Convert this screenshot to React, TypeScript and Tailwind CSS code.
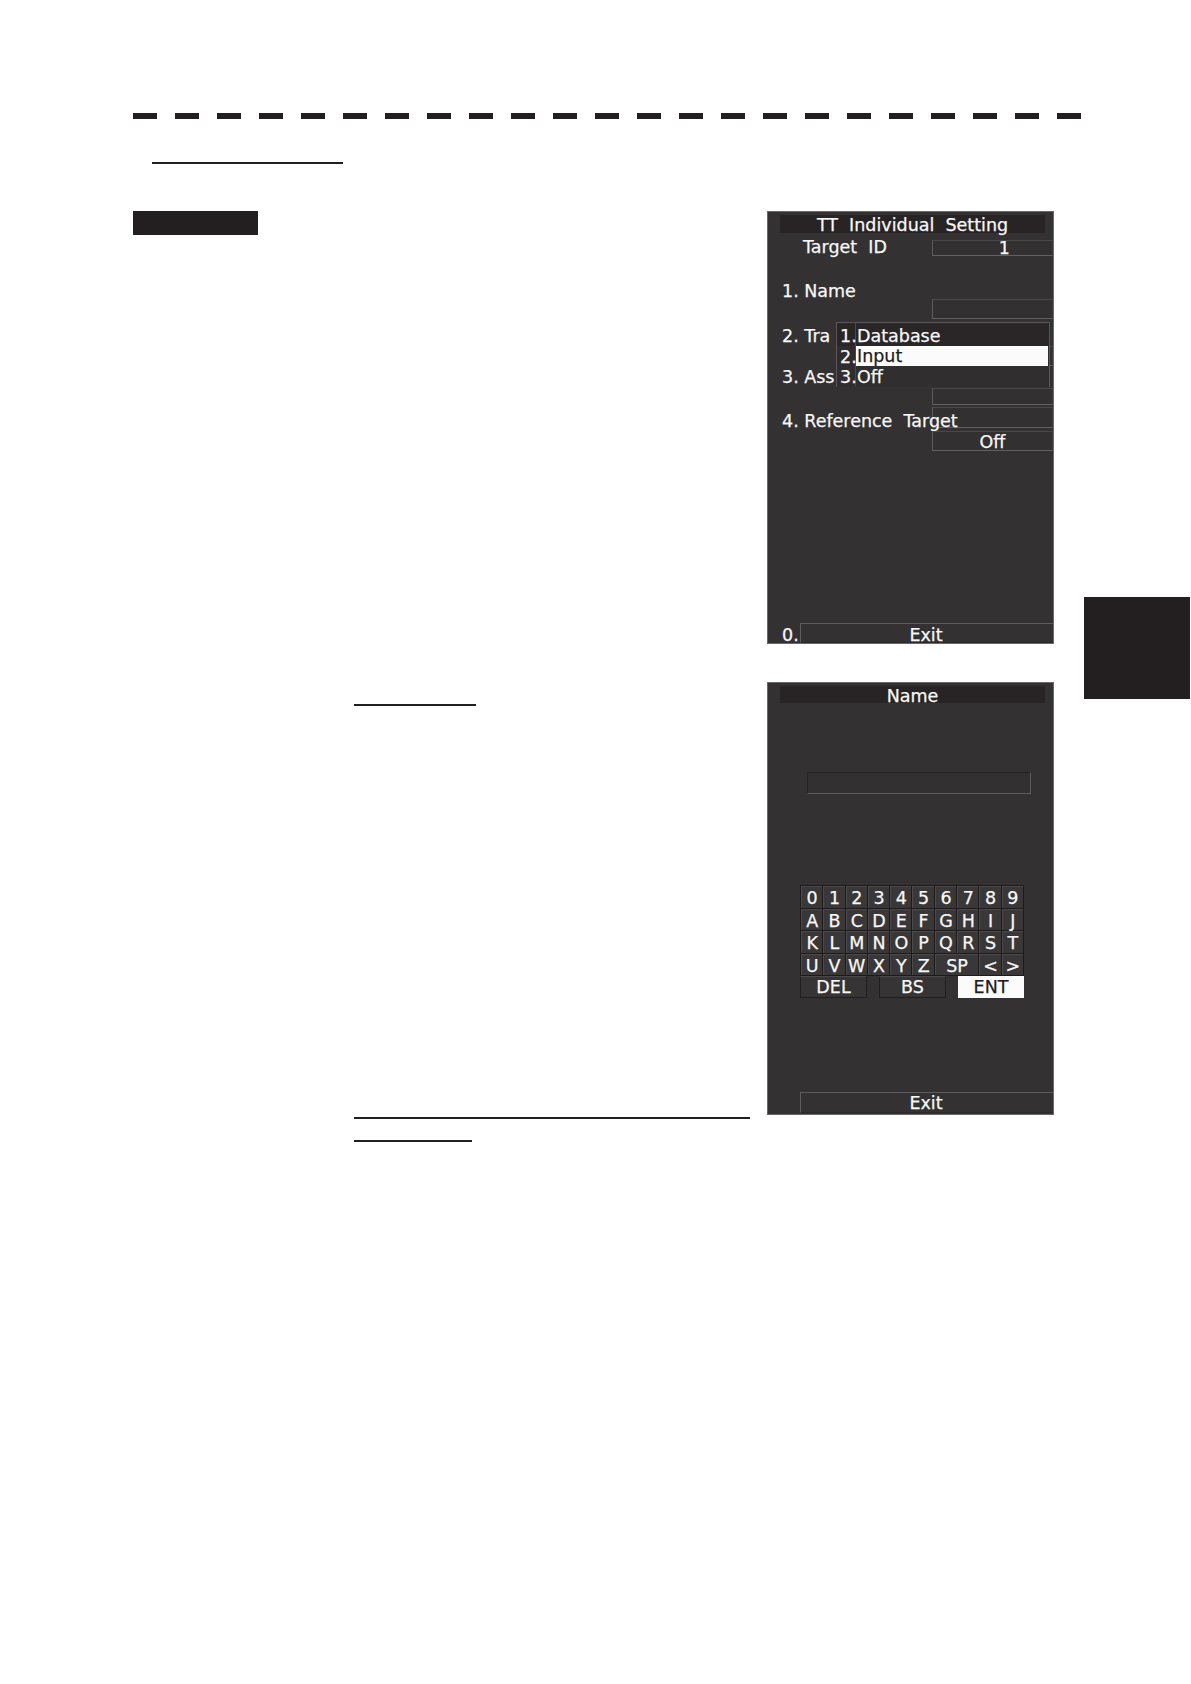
import React from "react";

const font = { fontFamily: '"DejaVu Sans", "Liberation Sans", sans-serif' };

function ValueBox({ children, className = "" }: { children?: React.ReactNode; className?: string }) {
  return (
    <div
      className={
        "box-border border border-t-[#4a4849] border-l-[#5c5a5b] border-b-[#626061] border-r-[#3a3839] bg-[#323031] " +
        className
      }
    >
      {children}
    </div>
  );
}

function Panel1() {
  return (
    <div className="relative box-border w-[287px] h-[433px] border border-[#6a6869] bg-[#333132] text-[#f7f7f7] text-[17.5px] [-webkit-text-stroke:0.25px_#f7f7f7]">
      <div className="flex flex-col">
        <div className="mt-[3px] ml-[12px] w-[265px] h-[18px] bg-[#282425] text-center leading-[20px] whitespace-pre">
          TT  Individual  Setting
        </div>
        <div className="mt-[4px] flex h-[20px]">
          <div className="w-[164px] pl-[35px] leading-[20px] whitespace-pre">Target  ID</div>
          <ValueBox className="mt-[3px] h-[16px] w-[121px] text-right pr-[42px] leading-[14px] whitespace-pre">1</ValueBox>
        </div>
        <div className="mt-[24px] h-[18px] pl-[14px] leading-[20px] whitespace-pre">1. Name</div>
        <ValueBox className="ml-[164px] w-[121px] h-[20px]" />
        <div className="mt-[7px] h-[20px] w-[68px] pl-[14px] leading-[20px] whitespace-pre">2. Tra</div>
        <ValueBox className="ml-[164px] w-[121px] h-[20px]" />
        <div className="mt-[1px] h-[20px] w-[68px] pl-[14px] leading-[20px] whitespace-pre">3. Ass</div>
        <ValueBox className="mt-[1px] ml-[164px] w-[121px] h-[17px]" />
        <div className="mt-[2px] grid">
          <ValueBox className="col-start-1 row-start-1 ml-[164px] w-[121px] h-[21px]" />
          <div className="col-start-1 row-start-1 pl-[14px] pt-[4px] leading-[20px] whitespace-pre">4. Reference  Target</div>
        </div>
        <ValueBox className="ml-[164px] w-[121px] h-[20px] text-center leading-[20px]">Off</ValueBox>
        <div className="mt-[172px] flex h-[20px]">
          <div className="w-[32px] pl-[14px] pt-[2px] leading-[20px]">0.</div>
          <div className="box-border flex-1 h-[20px] border-t border-l border-t-[#5e5c5d] border-l-[#5e5c5d] border-b border-b-[#2a2829] text-center pt-[1px] leading-[20px] pr-[2px]">
            Exit
          </div>
        </div>
      </div>
      {/* dropdown menu */}
      <div className="absolute left-[68px] top-[110px] w-[214px] h-[65px] box-border border border-[#595758] bg-[#2c2829] flex flex-col">
        <div className="flex h-[23px] bg-[#2a2627]">
          <div className="w-[19px] border-r border-[#4a4849] pl-[3px] pt-[3px] leading-[20px]">1.</div>
          <div className="flex-1 pl-[1px] pt-[3px] leading-[20px]">Database</div>
        </div>
        <div className="flex h-[20px] bg-[#2e2c2d]">
          <div className="w-[19px] border-r border-[#4a4849] pl-[3px] pt-[1px] leading-[20px]">2.</div>
          <div className="flex-1 mr-[1px] bg-[#fbfbfb] text-[#1e1c1d] [-webkit-text-stroke:0.25px_#1e1c1d] pl-[1px] pt-[1px] leading-[18px] overflow-hidden">Input</div>
        </div>
        <div className="flex flex-1 bg-[#302e2f]">
          <div className="w-[19px] border-r border-[#4a4849] pl-[3px] pt-[1px] leading-[20px]">3.</div>
          <div className="flex-1 pl-[1px] pt-[1px] leading-[20px]">Off</div>
        </div>
      </div>
    </div>
  );
}

const rows: string[][] = [
  ["0", "1", "2", "3", "4", "5", "6", "7", "8", "9"],
  ["A", "B", "C", "D", "E", "F", "G", "H", "I", "J"],
  ["K", "L", "M", "N", "O", "P", "Q", "R", "S", "T"],
];

function Key({ label, wide = false }: { label: string; wide?: boolean }) {
  return (
    <div
      className={
        (wide ? "col-span-2 " : "") +
        "h-[21.5px] bg-[#393738] text-center leading-[22px] border-t border-l border-[#4c4a4b]"
      }
    >
      {label}
    </div>
  );
}

function Panel2() {
  return (
    <div className="box-border w-[287px] h-[433px] border border-[#6a6869] bg-[#333132] text-[#f7f7f7] text-[17.5px] [-webkit-text-stroke:0.25px_#f7f7f7] flex flex-col">
      <div className="mt-[3px] ml-[12px] w-[265px] h-[17px] bg-[#282425] text-center leading-[20px]">Name</div>
      <div className="mt-[69px] ml-[39px] w-[224px] h-[22px] box-border border border-t-[#242223] border-l-[#242223] border-b-[#5e5c5d] border-r-[#5e5c5d] bg-[#323031]" />
      <div className="mt-[91px] ml-[32px] w-[224px] grid grid-cols-10 gap-px bg-[#1c1a1b] p-px">
        {rows.map((r) => r.map((k) => <Key key={k} label={k} />))}
        <Key label="U" />
        <Key label="V" />
        <Key label="W" />
        <Key label="X" />
        <Key label="Y" />
        <Key label="Z" />
        <Key label="SP" wide />
        <Key label="<" />
        <Key label=">" />
      </div>
      <div className="ml-[32px] w-[224px] flex h-[22px]">
        <div className="w-[67px] h-[22px] box-border border border-[#1f1d1e] border-t-[#4a4849] bg-[#363435] text-center leading-[21px]">DEL</div>
        <div className="ml-[12px] w-[67px] h-[22px] box-border border border-[#1f1d1e] border-t-[#4a4849] bg-[#363435] text-center leading-[21px]">BS</div>
        <div className="ml-[12px] w-[66px] h-[22px] bg-[#fbfbfb] text-[#1e1c1d] [-webkit-text-stroke:0.25px_#1e1c1d] text-center leading-[22px]">ENT</div>
      </div>
      <div className="mt-[94px] ml-[32px] w-[253px] h-[21px] box-border border-t border-l border-t-[#5e5c5d] border-l-[#5e5c5d] border-b border-b-[#2a2829] text-center leading-[21px] pr-[2px]">
        Exit
      </div>
    </div>
  );
}

export default function App() {
  return (
    <div className="relative w-[1191px] h-[1684px] bg-white overflow-hidden" style={font}>
      <div className="pt-[113px] ml-[133px] flex gap-[18px]">
        {Array.from({ length: 23 }).map((_, i) => (
          <div key={i} className="w-[24px] h-[6px] bg-[#231f20]" />
        ))}
      </div>
      <div className="mt-[43px] ml-[152px] w-[191px] h-[2px] bg-[#231f20]" />
      <div className="mt-[47px] ml-[133px] flex items-start">
        <div className="w-[634px] flex flex-col">
          <div className="w-[125px] h-[24px] bg-[#231f20]" />
          <div className="mt-[469px] ml-[221px] w-[122px] h-[2px] bg-[#231f20]" />
          <div className="mt-[411px] ml-[221px] w-[396px] h-[2px] bg-[#231f20]" />
          <div className="mt-[21px] ml-[221px] w-[118px] h-[2px] bg-[#231f20]" />
        </div>
        <div className="w-[287px] flex flex-col">
          <Panel1 />
          <div className="mt-[38px]">
            <Panel2 />
          </div>
        </div>
        <div className="ml-[30px] mt-[386px] w-[106px] h-[102px] bg-[#231f20]" />
      </div>
    </div>
  );
}
